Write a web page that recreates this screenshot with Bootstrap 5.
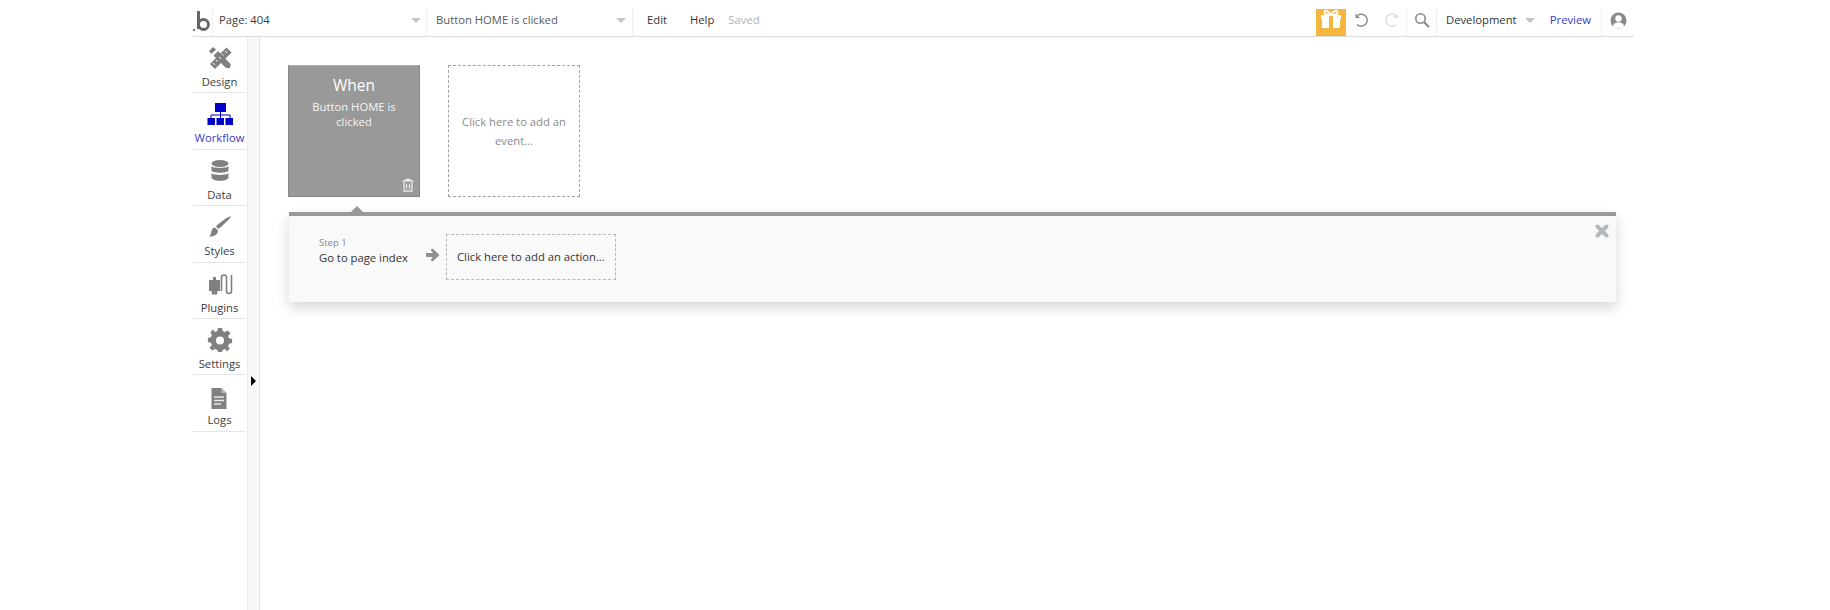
<!DOCTYPE html>
<html lang="en"><head><meta charset="utf-8"><title>Workflow</title>
<link rel="stylesheet" href="https://cdn.jsdelivr.net/npm/bootstrap@5.3.0/dist/css/bootstrap.min.css">
<style>
html,body{height:100%;overflow:hidden;background:#fff}
body{font-family:"Open Sans","Liberation Sans",sans-serif;font-size:11.25px;color:#3d3d3d}
.app-shell{margin-left:193px;width:1441px;height:610px}
.top-bar{height:37px;border-bottom:1px solid #dcdcdc;line-height:1}
.bar-cell{height:28px;margin-top:8px;padding-bottom:4px}
.logo-cell{width:20px;border-right:1px solid #f0f0f0}
.page-cell{width:214px;border-right:1px solid #f0f0f0;padding-left:6px;padding-right:5px}
.flow-cell{width:206px;border-right:1px solid #f0f0f0;padding-left:9px;padding-right:6px;color:#5a5a5a}
.caret-mini{width:0;height:0;border:5px solid transparent;border-top:5px solid #c4c4c4;border-bottom:0}
.menu-link{color:#333}
.edit-lnk{margin-left:14px}
.help-lnk{margin-left:23px}
.saved-lbl{color:#b0b0b0;margin-left:14px}
.gift-box{width:30px;height:27px;background:#f3b63f;margin-top:9px}
.undo-cell{width:61px;border-right:1px solid #f0f0f0;padding-left:8px;gap:13px}
.search-cell{width:30px;border-right:1px solid #f0f0f0}
.env-cell{width:165px;border-right:1px solid #f0f0f0;padding-left:9px}
.preview-lnk{color:#3a3ac8;margin-left:auto;margin-right:10px}
.user-cell{width:32px}
.work-area{height:573px}
.side-rail{width:54px;flex:none;text-align:center}
.rail-item{height:56.4px;border-bottom:1px solid #e4e4e4;padding-top:8px;margin-right:1px;line-height:1}
.rail-item svg{display:block;margin:0 auto;height:26px;width:26px}
.rail-item span{display:block;margin-top:4px;line-height:14px}
.rail-item.is-on span{color:#3a3ac8}
.fold-strip{width:13px;flex:none;background:#f8f8f8;border-left:1px solid #ececec;border-right:1px solid #e2e2e2;position:relative}
.fold-arrow{position:absolute;left:3px;top:339px;width:0;height:0;border:5px solid transparent;border-left:5px solid #000;border-right:0}
.canvas-pane{padding:28px 18px 0 28px;min-width:0}
.event-row{gap:28px}
.event-tile{width:132px;height:132px;text-align:center}
.event-on{background:#999;color:#fff;border:1px solid #888;border-top-color:#aaa;padding-top:9px;position:relative}
.event-on h6{font-size:15.5px;font-weight:400;line-height:20px;margin:0 0 4px;font-family:inherit}
.event-on p{margin:0 auto;line-height:15px;width:100px;color:#f4f4f4}
.trash-ico{position:absolute;right:4px;bottom:4px}
.event-add{border:1px dashed #a0a0a0;color:#8a8a8a;line-height:19px;padding:0 10px}
.action-panel{margin:15px 0 0 1px;height:90px;background:#f9f9f9;border-top:4px solid #999;border-radius:0 0 2px 2px;box-shadow:0 6px 14px rgba(0,0,0,.16);position:relative;padding:21px 0 0 30px}
.panel-notch{position:absolute;left:62px;top:-10px;width:0;height:0;border:6px solid transparent;border-bottom:6px solid #999;border-top:0}
.panel-close{position:absolute;right:7px;top:8px}
.step-col{width:107px;line-height:1}
.step-no{color:#8a8a8a;font-size:9.500px;line-height:12px}
.step-name{line-height:16px;color:#333;margin-top:1px}
.arrow-col{width:20px;margin-top:11px;line-height:0}
.action-add{width:170px;height:46px;border:1px dashed #b8b8b8;color:#333;padding-left:10px;margin-top:-3px}
</style></head>
<body>
<div class="app-shell d-flex flex-column">
  <header class="top-bar d-flex align-items-start">
    <div class="bar-cell logo-cell">
      <svg class="d-block" width="20" height="28" viewBox="0 0 20 28"><rect x="0" y="21" width="2" height="2" fill="#777"/><path d="M5.500 3v18" stroke="#666" stroke-width="3" fill="none"/><circle cx="10.500" cy="16.500" r="5" fill="none" stroke="#666" stroke-width="2.800"/></svg>
    </div>
    <div class="bar-cell page-cell d-flex align-items-center justify-content-between"><span>Page: 404</span><i class="caret-mini"></i></div>
    <div class="bar-cell flow-cell d-flex align-items-center justify-content-between"><span>Button HOME is clicked</span><i class="caret-mini"></i></div>
    <div class="bar-cell d-flex align-items-center"><span class="menu-link edit-lnk">Edit</span><span class="menu-link help-lnk">Help</span><span class="saved-lbl">Saved</span></div>
    <div class="d-flex align-items-start ms-auto">
      <div class="gift-box d-flex align-items-start justify-content-center">
        <svg width="22" height="20" viewBox="0 0 22 20"><path d="M2 6h18a1 1 0 0 1 1 1v3h-1v8a1 1 0 0 1-1 1H3a1 1 0 0 1-1-1v-8H1V7a1 1 0 0 1 1-1z" fill="#fff"/><rect x="9" y="6" width="4" height="13" fill="#f3b63f"/><path d="M11 6C8 1.500 5 .5 4.500 3S7 6 11 6zM11 6c3-4.500 6-5.500 6.500-3S15 6 11 6z" fill="none" stroke="#fff" stroke-width="1.800"/></svg>
      </div>
      <div class="bar-cell undo-cell d-flex align-items-center">
        <svg width="16" height="16" viewBox="0 0 16 16"><path d="M3.500 3.500A6 6 0 1 1 3 12.500" fill="none" stroke="#8a8a8a" stroke-width="1.400"/><path d="M1.500 1.500v4.500h4.500z" fill="#8a8a8a"/></svg>
        <svg width="16" height="16" viewBox="0 0 16 16"><path d="M12.500 3.500A6 6 0 1 0 13 12.500" fill="none" stroke="#ddd" stroke-width="1.400"/><path d="M14.500 1.500v4.500h-4.500z" fill="#ddd"/></svg>
      </div>
      <div class="bar-cell search-cell d-flex align-items-center justify-content-center">
        <svg width="16" height="16" viewBox="0 0 16 16"><circle cx="6.500" cy="6.500" r="4.700" fill="none" stroke="#8a8a8a" stroke-width="1.600"/><path d="M10 10l5 5" stroke="#8a8a8a" stroke-width="2.200"/></svg>
      </div>
      <div class="bar-cell env-cell d-flex align-items-center"><span class="menu-link">Development</span><i class="caret-mini ms-2"></i><span class="preview-lnk">Preview</span></div>
      <div class="bar-cell user-cell d-flex align-items-center justify-content-center">
        <svg width="17" height="17" viewBox="0 0 17 17"><defs><clipPath id="uc"><circle cx="8.500" cy="8.500" r="8"/></clipPath></defs><circle cx="8.500" cy="8.500" r="8" fill="#8a8a8a"/><g clip-path="url(#uc)" fill="#fff"><circle cx="8.500" cy="6.500" r="3.200"/><ellipse cx="8.500" cy="14.500" rx="5.500" ry="4.200"/></g></svg>
      </div>
    </div>
  </header>
  <div class="work-area d-flex">
    <nav class="side-rail">
      <div class="rail-item"><svg viewBox="0 0 26 26"><g fill="#808080"><path d="M2 6l4-4 3 2.500-4.500 4.500z"/><path d="M6.500 10.500l4.500-4.500 13 13.500-1.500 4-4-1z"/><path d="M19.500 2.500l5 5L8 24l-5-5z"/></g><path d="M18 6l2 2M15 9l1.500 1.500M12 12l2 2M9 15l1.500 1.500M6 18l2 2" stroke="#fff" stroke-width="1"/></svg><span>Design</span></div>
      <div class="rail-item is-on"><svg viewBox="0 0 26 26"><g fill="#0000c8"><rect x="8" y="2" width="11" height="9"/><rect x="0.500" y="17" width="7.500" height="7"/><rect x="9.500" y="17" width="7.500" height="7"/><rect x="18.500" y="17" width="7.500" height="7"/></g><path d="M13.500 11v6M4 17v-3h19v3" fill="none" stroke="#0000c8"/></svg><span>Workflow</span></div>
      <div class="rail-item"><svg viewBox="0 0 26 26"><g fill="#808080"><ellipse cx="13" cy="5.500" rx="8.500" ry="3.500"/><path d="M4.500 8c1 2.500 16 2.500 17 0v4.500c-1 3-16 3-17 0z"/><path d="M4.500 15c1 2.500 16 2.500 17 0v4.500c-1 4.500-16 4.500-17 0z"/></g></svg><span>Data</span></div>
      <div class="rail-item"><svg viewBox="0 0 26 26"><g fill="#808080"><path d="M24 2c-1 3-9 10-12.500 13l-2.500-2.500C12 9 21 2.500 24 2z"/><path d="M8 13.500l3 3c0 4-4 6-9 6 2-1.500 2-3 2.500-5.500S6.500 13.500 8 13.500z"/></g></svg><span>Styles</span></div>
      <div class="rail-item"><svg viewBox="0 0 26 26"><g fill="#808080"><path d="M2 9h4V6h3v3h4v11h-2.500l-.5 3.500H5L4.500 20H2z"/></g><path d="M14.500 20V6.500a2.500 2.500 0 0 1 5 0V20a2.500 2.500 0 0 0 5 0V4" fill="none" stroke="#808080" stroke-width="1.600"/></svg><span>Plugins</span></div>
      <div class="rail-item"><svg viewBox="0 0 26 26"><g fill="#808080"><path fill-rule="evenodd" d="M11 2h4l.7 3 2.300 1 2.700-1.600 2.800 2.800L21.100 10l1 2.300 3 .7v4l-3 .7-1 2.300 1.600 2.700-2.800 2.800L18 22.900l-2.300 1-.7 2.100h-4l-.7-2.100-2.300-1-2.700 1.600-2.800-2.800L4.900 19l-1-2.300-3-.7v-4l3-.7 1-2.300-1.600-2.800 2.800-2.800L8 6l2.300-1zM13 10.500a4 4 0 1 0 0 8 4 4 0 0 0 0-8z" transform="translate(0 -1)"/></g></svg><span>Settings</span></div>
      <div class="rail-item"><svg viewBox="0 -5 26 26"><path d="M4.500 0h10l5 5v16h-15z" fill="#808080"/><path d="M14.500 0v5h5z" fill="#bbb"/><path d="M7 9h10M7 12.500h10M7 16h7" stroke="#e8e8e8" stroke-width="1.300"/></svg><span>Logs</span></div>
    </nav>
    <div class="fold-strip"><i class="fold-arrow"></i></div>
    <main class="canvas-pane flex-grow-1">
      <div class="d-flex event-row">
        <div class="event-tile event-on">
          <h6>When</h6>
          <p>Button HOME is clicked</p>
          <svg class="trash-ico" width="14" height="14" viewBox="0 0 14 14"><path d="M1.500 3h11M5 3V1.500h4V3M3 3.500v9.500h8V3.500M5.500 5.500v5.500M8.500 5.500v5.500" fill="none" stroke="#e6e6e6" stroke-width="1.300"/></svg>
        </div>
        <div class="event-tile event-add d-flex align-items-center justify-content-center">Click here to add an event...</div>
      </div>
      <section class="action-panel d-flex align-items-start">
        <i class="panel-notch"></i>
        <div class="step-col"><div class="step-no">Step 1</div><div class="step-name">Go to page index</div></div>
        <div class="arrow-col"><svg width="14" height="14" viewBox="0 0 14 14"><path d="M0 5h7L4.500 2 6.500 0.500 13.500 7l-7 6.500-2-1.500L7 9H0z" fill="#8f8f8f"/></svg></div>
        <div class="action-add d-flex align-items-center">Click here to add an action...</div>
        <svg class="panel-close" width="14" height="14" viewBox="0 0 14 14"><path d="M2.500 2.500l9 9M11.500 2.500l-9 9" stroke="#b3b8ba" stroke-width="4" stroke-linecap="round"/></svg>
      </section>
    </main>
  </div>
</div>
<script src="https://cdn.jsdelivr.net/npm/bootstrap@5.3.0/dist/js/bootstrap.bundle.min.js"></script>
</body></html>
